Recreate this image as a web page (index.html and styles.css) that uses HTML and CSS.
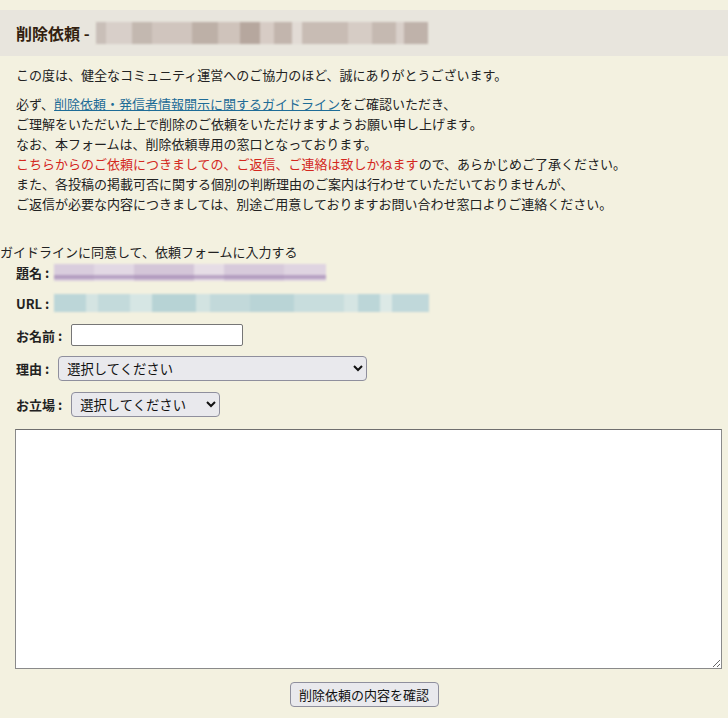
FILE: index.html
```html
<!DOCTYPE html>
<html lang="ja">
<head>
<meta charset="utf-8">
<title>削除依頼</title>
<link rel="stylesheet" href="styles.css">
</head>
<body>
<header class="head">
  <h1 class="title">削除依頼 -</h1>
  <span class="blur blur-title" aria-hidden="true"></span>
</header>
<main class="main">
  <p class="para">この度は、健全なコミュニティ運営へのご協力のほど、誠にありがとうございます。</p>
  <p class="para">必ず、<a class="link" href="#">削除依頼・発信者情報開示に関するガイドライン</a>をご確認いただき、<br>
  ご理解をいただいた上で削除のご依頼をいただけますようお願い申し上げます。<br>
  なお、本フォームは、削除依頼専用の窓口となっております。<br>
  <span class="red">こちらからのご依頼につきましての、ご返信、ご連絡は致しかねます</span>ので、あらかじめご了承ください。<br>
  また、各投稿の掲載可否に関する個別の判断理由のご案内は行わせていただいておりませんが、<br>
  ご返信が必要な内容につきましては、別途ご用意しておりますお問い合わせ窓口よりご連絡ください。</p>
</main>
<form class="form">
  <div class="agree">ガイドラインに同意して、依頼フォームに入力する</div>
  <div class="row row-subject"><b class="lbl lbl-tight">題名 :</b><span class="blur blur-subject"></span></div>
  <div class="row row-url"><b class="lbl lbl-tight">URL :</b><span class="blur blur-url"></span></div>
  <div class="row row-name"><b class="lbl">お名前 :</b><input class="input" type="text"></div>
  <div class="row row-reason"><b class="lbl">理由 :</b><select class="select select-wide"><option>選択してください</option></select></div>
  <div class="row row-pos"><b class="lbl">お立場 :</b><select class="select select-narrow"><option>選択してください</option></select></div>
  <div class="row-area"><textarea class="area"></textarea></div>
  <div class="row-btn"><button class="btn" type="button">削除依頼の内容を確認</button></div>
</form>
</body>
</html>
```
FILE: styles.css
```css
html, body {
  margin: 0;
  padding: 0;
  background: #f3f1e0;
}
body {
  font-family: "Noto Sans CJK JP", "Noto Sans", sans-serif;
  font-size: 13px;
  color: #222;
}
.head {
  margin-top: 10px;
  height: 46px;
  background: #e8e5dd;
  display: flex;
  align-items: center;
  padding-left: 16px;
  box-sizing: border-box;
}
.title {
  margin: 0;
  font-size: 16px;
  font-weight: bold;
  color: #331f10;
  line-height: 20px;
}
.blur {
  display: inline-block;
  filter: blur(1.2px);
}
.blur-title {
  margin-left: 6px;
  width: 332px;
  height: 22px;
  background:
    linear-gradient(90deg,
      #c9bfb8 0 10px, #d8cfc9 10px 36px, #c3b8b0 36px 56px, #d0c5be 56px 96px,
      #bdb0a7 96px 122px, #cfc3bb 122px 144px, #b6a79e 144px 164px, #d7ccc5 164px 178px,
      #c2b5ad 178px 196px, #e2dbd5 196px 206px, #c8bcb4 206px 252px, #d6ccc5 252px 276px,
      #c5b9b1 276px 300px, #d9d0ca 300px 308px, #bfb2aa 308px 332px);
}
.main {
  padding: 0 16px;
  margin-top: 9px;
}
.para {
  margin: 0 0 9px;
  line-height: 20px;
}
.link {
  color: #1e6c97;
  text-decoration: underline;
}
.red {
  color: #d3281e;
}
.form {
  margin: 28px 0 0;
}
.agree {
  line-height: 20px;
}
.row {
  display: flex;
  align-items: center;
  padding-left: 16px;
}
.lbl {
  font-weight: bold;
  margin-right: 9px;
  white-space: pre;
}
.lbl-tight {
  margin-right: 5px;
}
.row-subject { height: 20px; }
.row-url { height: 20px; margin-top: 11px; }
.row-name { height: 22px; margin-top: 11px; }
.row-reason { height: 25px; margin-top: 10px; }
.row-pos { height: 25px; margin-top: 11px; }
.blur-subject {
  width: 272px;
  height: 17px;
  background:
    linear-gradient(180deg, transparent 0 11px, rgba(150,120,170,0.55) 11px 15px, transparent 15px),
    linear-gradient(90deg,
      #d9cddd 0 40px, #e2d8e4 40px 80px, #d4c6d8 80px 140px, #e6dde6 140px 170px,
      #d7cadb 170px 230px, #dfd4e1 230px 272px);
}
.blur-url {
  width: 375px;
  height: 18px;
  background:
    linear-gradient(90deg,
      #bcd6d8 0 32px, #d4e4e2 32px 44px, #c3dadb 44px 76px, #d6e6e4 76px 98px,
      #b7d3d5 98px 142px, #d2e3e1 142px 156px, #c2d9da 156px 196px, #b9d4d6 196px 240px,
      #c8dddd 240px 290px, #d5e5e3 290px 304px, #bcd6d8 304px 326px, #dce9e6 326px 338px,
      #c0d8da 338px 375px);
}
.input {
  width: 172px;
  height: 22px;
  box-sizing: border-box;
  border: 1px solid #767676;
  border-radius: 2px;
  background: #fff;
  margin: 0;
  padding: 1px 3px;
}
.select {
  height: 25px;
  box-sizing: border-box;
  margin: 0;
  font-family: "Noto Sans CJK JP", sans-serif;
  font-size: 13.33px;
  color: #111;
  background: #e9e9ed;
  border: 1px solid #8f8f9d;
  border-radius: 4px;
  padding: 0 4px;
}
.select-wide { width: 309px; }
.select-narrow { width: 149px; }
.row-area {
  padding-left: 15px;
  margin-top: 12px;
  height: 240px;
}
.area {
  display: block;
  width: 707px;
  height: 240px;
  box-sizing: border-box;
  margin: 0;
  border: 1px solid #8a8a8a;
  border-top-color: #6f6f6f;
  background: #fff;
  resize: both;
}
.row-btn {
  display: flex;
  justify-content: center;
  margin-top: 13px;
}
.btn {
  width: 149px;
  height: 25px;
  box-sizing: border-box;
  margin: 0;
  font-family: "Noto Sans CJK JP", sans-serif;
  font-size: 13px;
  color: #111;
  background: #e9e9ed;
  border: 1px solid #8f8f9d;
  border-radius: 4px;
  padding: 0;
}
```
